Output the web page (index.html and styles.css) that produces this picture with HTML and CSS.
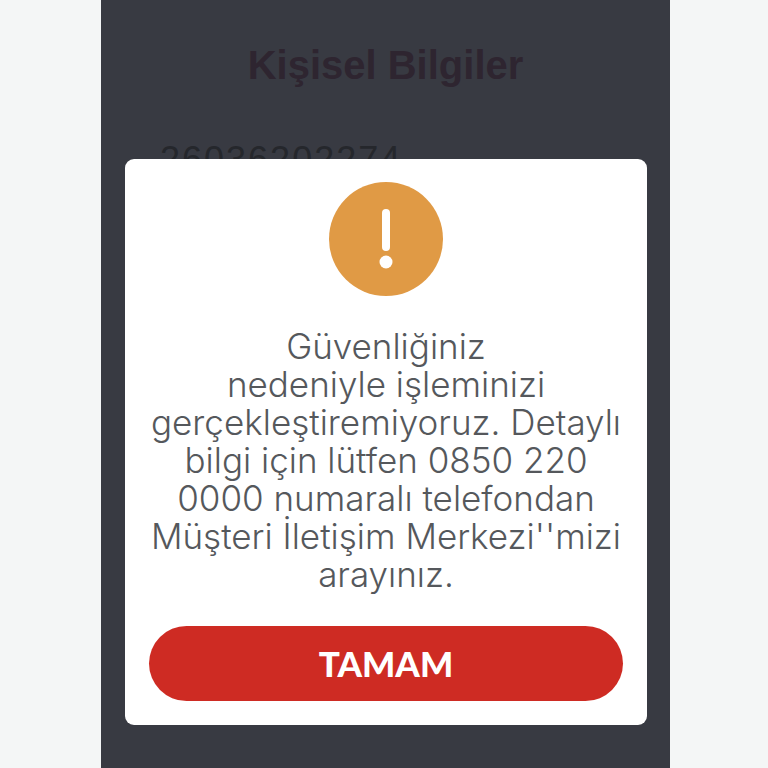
FILE: index.html
```html
<!DOCTYPE html>
<html>
<head>
<meta charset="utf-8">
<title>Kişisel Bilgiler</title>
<link rel="stylesheet" href="styles.css">
</head>
<body>
<div class="screen">
	<h1 class="title">Kişisel Bilgiler</h1>
	<p class="number">26036202274</p>
	<div class="overlay">
		<div class="dialog">
			<svg class="alert_icon" width="114" height="114" viewBox="0 0 114 114">
				<circle cx="57" cy="57" r="57" fill="#e09a45"/>
				<rect x="53" y="27" width="8" height="42" rx="4" fill="#fff"/>
				<circle cx="57" cy="80" r="6.500" fill="#fff"/>
			</svg>
			<p class="message">Güvenliğiniz<br>nedeniyle işleminizi<br>gerçekleştiremiyoruz. Detaylı<br>bilgi için lütfen 0850 220<br>0000 numaralı telefondan<br>Müşteri İletişim Merkezi''mizi<br>arayınız.</p>
			<div class="ok_button">TAMAM</div>
		</div>
	</div>
</div>
</body>
</html>
```
FILE: styles.css
```css
body, h1, p {
	margin: 0;
	padding: 0;
}
body {
	height: 768px;
	overflow: hidden;
	background: #f4f6f6;
	font-family: Lato, "Liberation Sans", sans-serif;
}
.screen {
	position: relative;
	box-sizing: border-box;
	width: 569px;
	height: 768px;
	margin-left: 101px;
	padding: 42px 59px 0;
	background: #383a42;
}
.title {
	font: bold 40px/46px "Liberation Sans", sans-serif;
	color: #2e2530;
	text-align: center;
}
.number {
	margin-top: 51px;
	font: 36px/42px "Liberation Sans", sans-serif;
	letter-spacing: 2px;
	color: #25272c;
}
.overlay {
	position: absolute;
	top: 159px;
	left: 24px;
	width: 522px;
}
.dialog {
	box-sizing: border-box;
	display: flex;
	flex-direction: column;
	align-items: center;
	height: 566px;
	padding: 23px 24px 24px;
	background: #fff;
	border-radius: 9px;
}
.alert_icon {
	display: block;
	flex: none;
}
.message {
	margin-top: 31px;
	font-family: Inter, Lato, sans-serif;
	font-size: 35px;
	font-weight: 300;
	line-height: 38px;
	color: #55585c;
	text-align: center;
	white-space: nowrap;
}
.ok_button {
	margin-top: auto;
	width: 474px;
	height: 75px;
	border-radius: 38px;
	background: #ce2b23;
	color: #fff;
	font-size: 35px;
	font-weight: 900;
	line-height: 75px;
	text-align: center;
}
```
